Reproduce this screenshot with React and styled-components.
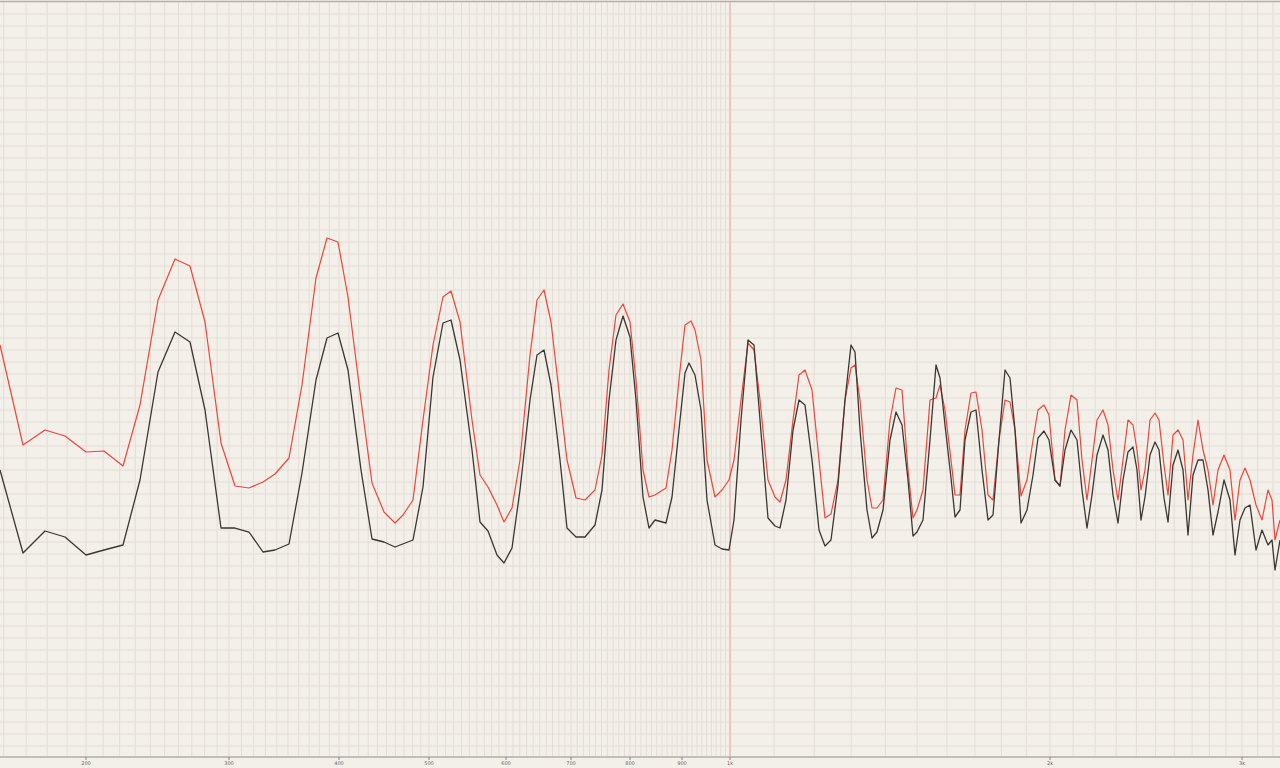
import React from "react";
import styled, { createGlobalStyle } from "styled-components";

const G = createGlobalStyle`
  html,body{margin:0;padding:0;background:#f3f0ea;overflow:hidden;}
  body{font-family:"DejaVu Sans",sans-serif;}
`;
const Wrap = styled.div`width:1280px;height:768px;background:#f3f0ea;`;
const Svg = styled.svg`display:block;`;

const anchors = [[150,-20],[200,86],[300,229],[400,339],[500,429],[600,506],[700,571],[800,630],[900,682],[1000,730],[2000,1050],[3000,1242],[4000,1380]];
function fx(f){
  for(let i=0;i<anchors.length-1;i++){
    const [f0,x0]=anchors[i],[f1,x1]=anchors[i+1];
    if(f<=f1){const t=(Math.log(f)-Math.log(f0))/(Math.log(f1)-Math.log(f0));return x0+t*(x1-x0);}
  }
  return 1400;
}
const vlines=[];
for(let f=150;f<1000;f+=10) vlines.push(fx(f));
for(let f=1000;f<=3500;f+=100) vlines.push(fx(f));
const hlines=[];
for(let y=14;y<757;y+=12) hlines.push(y);

const black="0,470 23,553 45,531 65,537 86,555 104,550 123,545 140,480 158,372 175,332 190,342 205,410 221,528 235,528 249,532 263,552 275,550 289,544 302,473 316,380 327,338 338,333 348,370 361,470 372,539 384,542 395,547 413,540 423,487 433,377 443,323 451,320 460,360 472,450 480,522 488,531 497,555 504,563 512,548 520,490 530,400 537,355 544,350 551,385 560,460 567,528 576,537 585,537 595,525 602,490 609,400 616,340 623,316 630,337 636,400 643,497 649,528 655,520 666,523 672,497 680,420 685,373 689,363 695,375 701,410 707,500 715,545 722,549 729,550 734,520 741,420 748,340 754,345 760,420 768,518 775,526 780,528 786,500 793,430 799,400 805,405 812,460 819,530 825,546 831,540 838,485 845,400 851,345 855,352 860,430 867,510 872,538 877,532 883,510 890,440 896,412 902,425 908,480 913,536 917,532 923,520 930,440 936,365 940,378 945,425 951,478 955,517 960,510 965,440 971,412 976,410 982,470 988,520 993,515 999,440 1005,370 1010,378 1015,430 1021,523 1027,510 1033,475 1038,438 1044,431 1049,440 1055,480 1060,486 1065,450 1071,430 1077,440 1082,490 1087,528 1092,495 1097,455 1103,435 1108,450 1113,495 1118,523 1123,480 1128,452 1133,447 1137,470 1141,520 1145,497 1150,455 1155,442 1159,450 1164,498 1168,522 1173,465 1178,450 1183,470 1188,535 1193,475 1198,460 1203,460 1208,490 1213,535 1218,512 1224,480 1230,500 1235,555 1240,520 1245,508 1250,505 1256,550 1262,530 1268,545 1272,540 1275,570 1280,540";
const red="0,345 23,445 45,430 65,436 86,452 104,451 123,466 140,405 158,300 175,259 190,266 205,322 221,443 235,486 249,488 263,482 275,474 289,458 302,385 316,278 327,238 338,242 348,297 361,400 372,483 384,512 395,523 403,515 413,500 423,420 433,345 443,297 451,291 460,322 472,420 480,475 488,487 497,505 504,522 512,508 520,460 530,355 537,300 544,290 551,322 560,400 567,460 576,498 585,500 595,490 602,455 609,370 616,315 623,304 630,322 636,380 643,470 649,497 655,495 666,488 672,450 680,370 685,325 691,321 695,330 701,360 707,460 715,497 722,490 729,480 734,460 741,400 748,343 754,350 760,400 768,480 775,497 780,502 786,480 793,420 799,375 805,370 812,390 819,460 825,518 831,514 838,480 845,400 851,368 855,365 860,400 867,480 872,508 877,508 883,500 890,420 896,388 902,390 908,470 913,518 917,510 923,490 930,400 936,398 940,385 945,410 951,460 955,495 960,495 965,430 971,393 976,392 982,430 988,495 993,500 999,440 1005,400 1010,402 1015,430 1021,496 1027,480 1033,440 1038,410 1044,405 1049,415 1055,480 1060,486 1065,430 1071,395 1077,400 1082,460 1087,500 1092,460 1097,420 1103,410 1108,425 1113,470 1118,500 1123,460 1128,420 1133,425 1137,450 1141,490 1145,470 1150,420 1155,413 1159,420 1164,465 1168,495 1173,435 1178,430 1183,440 1188,500 1193,455 1198,420 1203,450 1208,470 1213,505 1218,470 1224,455 1230,470 1235,520 1240,480 1245,468 1250,480 1256,505 1262,520 1268,490 1272,500 1275,540 1280,520";

const labels=[[200,"200"],[300,"300"],[400,"400"],[500,"500"],[600,"600"],[700,"700"],[800,"800"],[900,"900"],[1000,"1k"],[2000,"2k"],[3000,"3k"]];

export default function App(){
  return (<Wrap><G/>
    <Svg width="1280" height="768" viewBox="0 0 1280 768">
      {vlines.map((x,i)=><line key={"v"+i} x1={x} x2={x} y1="2" y2="757" stroke="#e4ddd5" strokeWidth="1"/>)}
      {hlines.map((y,i)=><line key={"h"+i} x1="0" x2="1280" y1={y} y2={y} stroke="#e4ddd5" strokeWidth="1"/>)}
      <line x1="0" x2="1280" y1="1.5" y2="1.5" stroke="#b5aea6" strokeWidth="1.5"/>
      <line x1="730" x2="730" y1="2" y2="757" stroke="#e9aaa2" strokeWidth="1"/>
      <polyline points={red} fill="none" stroke="#e8483a" strokeWidth="1.2" strokeLinejoin="round"/>
      <polyline points={black} fill="none" stroke="#3a3632" strokeWidth="1.3" strokeLinejoin="round"/>
      <line x1="0" x2="1280" y1="757" y2="757" stroke="#b5aea6" strokeWidth="1.5"/>
      {labels.map(([f,t])=>{const x=fx(f);return <g key={t}>
        <line x1={x} x2={x} y1="757" y2="760" stroke="#8a837c"/>
        <text x={x} y="764.5" fontSize="5" fill="#6b645e" textAnchor="middle" fontFamily="DejaVu Sans">{t}</text></g>;})}
    </Svg>
  </Wrap>);
}
